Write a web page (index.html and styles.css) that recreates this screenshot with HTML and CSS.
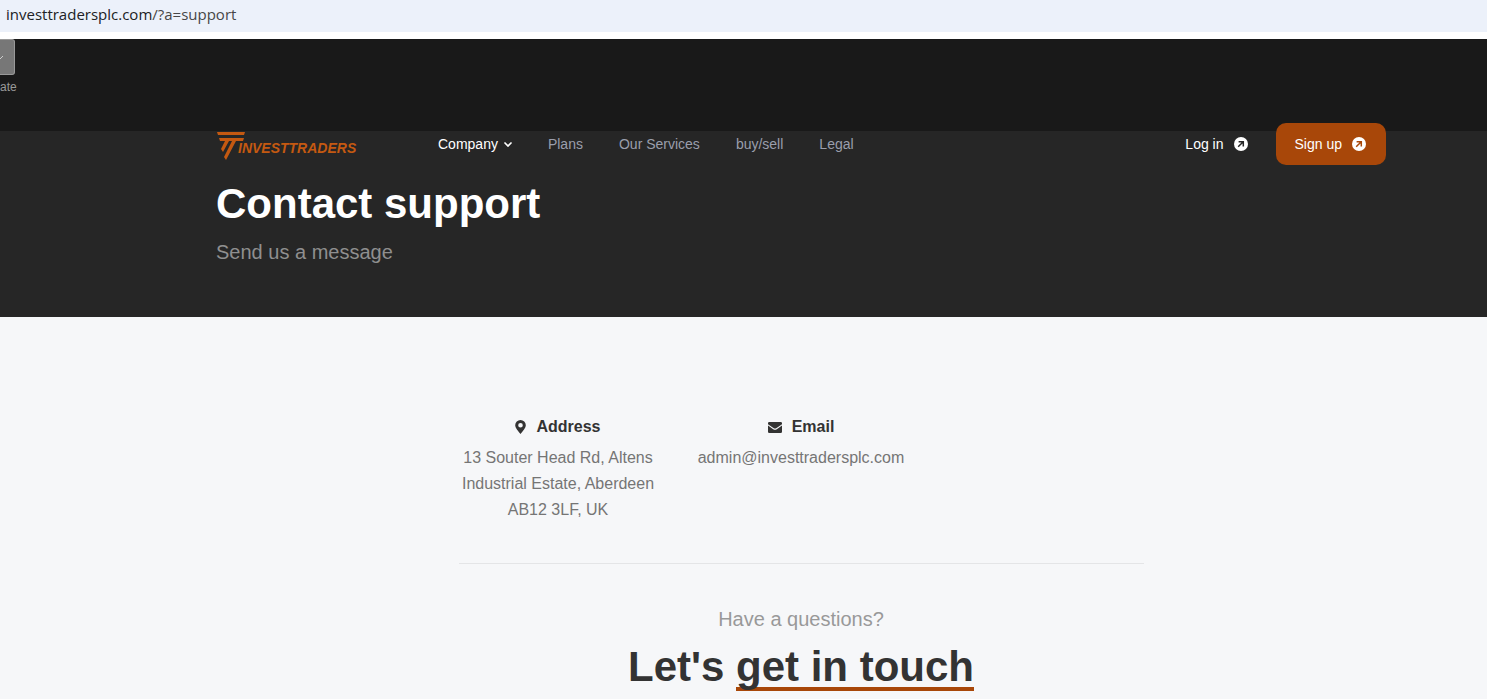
FILE: index.html
```html
<!DOCTYPE html>
<html lang="en">
<head>
  <meta charset="UTF-8">
  <title>Contact support</title>
  <link rel="stylesheet" href="styles.css">
</head>
<body>
  <div class="address-bar">
    <span class="host">investtradersplc.com</span><span class="path">/?a=support</span>
  </div>

  <div class="hero">
    <div class="side-tool">
      <button class="side-button" type="button" aria-label="Toggle">
        <svg width="6" height="8" viewBox="0 0 6 8"><path d="M0 6 L3 3" fill="none" stroke="#ccc"/></svg>
      </button>
      <span>ate</span>
    </div>

    <header class="header container">
      <a class="logo" href="#" aria-label="Investtraders">
        <svg width="28" height="28" viewBox="0 0 28 28" fill="#c45911">
          <path d="M0 0H28L27 3H1Z"/>
          <path d="M2 6H27L26 9H19L9 28L7 25L15 9H12L6 20L4 17L8 9H3Z"/>
        </svg>
        <span>INVESTTRADERS</span>
      </a>
      <nav class="nav">
        <a class="active" href="#">Company
          <svg width="8" height="5" viewBox="0 0 8 5"><path d="M1 1 L4 4 L7 1" fill="none" stroke="#fff" stroke-width="1.7" stroke-linecap="round"/></svg>
        </a>
        <a href="#">Plans</a>
        <a href="#">Our Services</a>
        <a href="#">buy/sell</a>
        <a href="#">Legal</a>
      </nav>
      <div class="actions">
        <a class="login" href="#">Log in
          <svg width="14" height="14" viewBox="0 0 14 14"><circle cx="7" cy="7" r="7" fill="#fff"/><path d="M4.2 9.8 L9 5 M4.6 4.7 H9.3 V9.4" fill="none" stroke="#262626" stroke-width="1.5"/></svg>
        </a>
        <a class="signup" href="#">Sign up
          <svg width="14" height="14" viewBox="0 0 14 14"><circle cx="7" cy="7" r="7" fill="#fff"/><path d="M4.2 9.8 L9 5 M4.6 4.7 H9.3 V9.4" fill="none" stroke="#a84709" stroke-width="1.5"/></svg>
        </a>
      </div>
    </header>

    <div class="hero-text container">
      <h1>Contact support</h1>
      <p>Send us a message</p>
    </div>
  </div>

  <main class="content">
    <div class="inner">
      <div class="contacts">
        <div class="contact">
          <h2>
            <svg width="11" height="14" viewBox="0 0 11 14"><path fill="#333" fill-rule="evenodd" d="M5.5 0A5.3 5.3 0 0 0 0.2 5.3C0.2 8 3.5 11.5 5.5 14C7.5 11.5 10.8 8 10.8 5.3A5.3 5.3 0 0 0 5.5 0ZM5.5 3A2.3 2.3 0 1 1 5.5 7.6A2.3 2.3 0 1 1 5.5 3Z"/></svg>
            Address
          </h2>
          <p>13 Souter Head Rd, Altens Industrial Estate, Aberdeen AB12 3LF, UK</p>
        </div>
        <div class="contact">
          <h2>
            <svg width="14" height="11" viewBox="0 0 14 11"><path fill="#333" d="M1.3 0H12.7A1.3 1.3 0 0 1 14 1.3V2.2L8.2 6.2Q7 7 5.8 6.2L0 2.2V1.3A1.3 1.3 0 0 1 1.3 0ZM0 3.6L5.2 7.2Q7 8.4 8.8 7.2L14 3.6V9.7A1.3 1.3 0 0 1 12.7 11H1.3A1.3 1.3 0 0 1 0 9.7Z"/></svg>
            Email
          </h2>
          <p>admin@investtradersplc.com</p>
        </div>
      </div>

      <div class="touch">
        <p>Have a questions?</p>
        <h2>Let's <span>get in touch</span></h2>
      </div>
    </div>
  </main>
</body>
</html>
```
FILE: styles.css
```css
* {
  box-sizing: border-box;
}
body {
  margin: 0;
  background: #f6f7f9;
  font-family: "Liberation Sans", Arial, sans-serif;
  overflow: hidden;
}
h1, h2, p {
  margin: 0;
}
a {
  text-decoration: none;
}
.container {
  max-width: 1170px;
  margin: 0 auto;
}
.address-bar {
  height: 39px;
  padding: 0 6px;
  background: #ecf1fa;
  border-bottom: 7px solid #fff;
  font: 15px/28px "Open Sans", sans-serif;
  color: #202124;
}
.path {
  color: #474747;
}
.hero {
  position: relative;
  padding: 84px 0 51px 115px;
  background: linear-gradient(#191919 92px, #262626 92px);
}
.side-tool {
  position: absolute;
  top: 0;
  left: 0;
  font-size: 12px;
  line-height: 14px;
  color: #999;
}
.side-button {
  display: flex;
  align-items: center;
  width: 15px;
  height: 36px;
  margin-bottom: 5px;
  padding: 0;
  background: #777;
  border: 1px solid #999;
  border-left: 0;
  border-radius: 0 3px 3px 0;
}
.header {
  display: flex;
  align-items: center;
  height: 42px;
  font-size: 14px;
}
.header a {
  color: #9a9eac;
}
.header .logo {
  display: flex;
  width: 222px;
  padding: 4px 0 0 1px;
  color: #c45911;
}
.logo span {
  margin: 8px 0 0 -7px;
  font-size: 14px;
  font-weight: bold;
  font-style: italic;
}
.nav {
  display: flex;
  gap: 36px;
}
.nav a, .actions a {
  display: flex;
  align-items: center;
}
.nav .active {
  gap: 6px;
  color: #fff;
}
.actions {
  display: flex;
  gap: 28px;
  margin-left: auto;
}
.actions a {
  gap: 10px;
  color: #fff;
}
.actions .signup {
  height: 42px;
  padding: 0 20px 0 19px;
  background: #a84709;
  border-radius: 10px;
}
h1 {
  padding-top: 12px;
  font-size: 42px;
  line-height: 54px;
  color: #fff;
}
.hero-text p {
  padding-top: 7px;
  font-size: 20px;
  line-height: 28px;
  color: #8f8f8f;
}
.content {
  padding: 96px 0 0 115px;
}
.inner {
  max-width: 685px;
  margin: 0 auto;
}
.contacts {
  display: grid;
  grid-template-columns: repeat(3, 1fr);
  gap: 32px;
  margin: 0 -6px;
  padding-bottom: 40px;
}
.contact {
  text-align: center;
}
.contact h2 {
  display: flex;
  align-items: center;
  justify-content: center;
  gap: 10px;
  height: 28px;
  font-size: 16px;
  color: #333;
}
.contact p {
  padding-top: 4px;
  font-size: 16px;
  line-height: 26px;
  color: #757575;
}
.touch {
  padding-top: 40px;
  border-top: 1px solid #e4e5e7;
  text-align: center;
}
.touch p {
  font-size: 20px;
  line-height: 30px;
  color: #999;
}
.touch h2 {
  padding-top: 6px;
  font-size: 42px;
  line-height: 54px;
  color: #333;
}
.touch span {
  display: inline-block;
  background: linear-gradient(#a84709, #a84709) 0 47px / 100% 4px no-repeat;
}
```
